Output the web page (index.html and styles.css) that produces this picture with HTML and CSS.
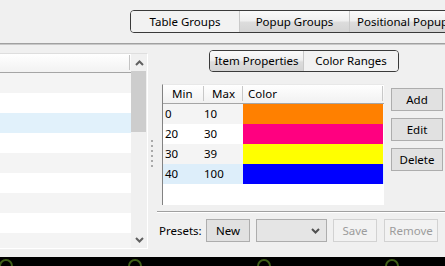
FILE: index.html
```html
<!DOCTYPE html>
<html>
<head>
<meta charset="utf-8">
<link rel="stylesheet" href="styles.css">
</head>
<body>
<div class="app">
  <div class="topbar">
    <div class="seg seg-top">
      <div class="seg-item flat w108">Table Groups</div>
      <div class="seg-item grad w110">Popup Groups</div>
      <div class="seg-item grad w120">Positional Popup</div>
    </div>
  </div>
  <div class="rule"></div>
  <div class="main">
    <div class="left">
      <div class="list">
        <div class="list-body">
          <div class="list-header"><div class="lh-col"></div></div>
          <div class="lrow alt"></div>
          <div class="lrow"></div>
          <div class="lrow sel"></div>
          <div class="lrow"></div>
          <div class="lrow alt"></div>
          <div class="lrow"></div>
          <div class="lrow alt"></div>
          <div class="lrow"></div>
          <div class="lrow alt"></div>
        </div>
        <div class="vscroll">
          <div class="sbtn">
            <svg width="9" height="6" viewBox="0 0 9 6"><path d="M1 5 L4.5 1.5 L8 5" fill="none" stroke="#606060" stroke-width="2"/></svg>
          </div>
          <div class="thumb"></div>
          <div class="track"></div>
          <div class="sbtn">
            <svg width="9" height="6" viewBox="0 0 9 6"><path d="M1 1 L4.5 4.5 L8 1" fill="none" stroke="#606060" stroke-width="2"/></svg>
          </div>
        </div>
      </div>
    </div>
    <div class="splitter">
      <div class="grip">
        <span></span><span></span><span></span><span></span><span></span><span></span>
      </div>
    </div>
    <div class="right">
      <div class="tabs-row">
        <div class="seg seg-tabs">
          <div class="seg-item grad w93">Item Properties</div>
          <div class="seg-item flat w95">Color Ranges</div>
        </div>
      </div>
      <div class="content">
        <div class="table">
          <div class="thead">
            <div class="th c-min">Min</div>
            <div class="th c-max">Max</div>
            <div class="th c-color">Color</div>
          </div>
          <div class="trow alt">
            <div class="td c-min">0</div>
            <div class="td c-max">10</div>
            <div class="td c-color sw-orange"></div>
          </div>
          <div class="trow">
            <div class="td c-min">20</div>
            <div class="td c-max">30</div>
            <div class="td c-color sw-pink"></div>
          </div>
          <div class="trow alt">
            <div class="td c-min">30</div>
            <div class="td c-max">39</div>
            <div class="td c-color sw-yellow"></div>
          </div>
          <div class="trow sel">
            <div class="td c-min">40</div>
            <div class="td c-max">100</div>
            <div class="td c-color sw-blue"></div>
          </div>
        </div>
        <div class="side-btns">
          <div class="btn">Add</div>
          <div class="btn">Edit</div>
          <div class="btn">Delete</div>
        </div>
      </div>
      <div class="sep"></div>
      <div class="presets">
        <span class="plabel">Presets:</span>
        <div class="btn btn-new">New</div>
        <div class="combo">
          <svg width="9" height="6" viewBox="0 0 9 6"><path d="M1 1 L4.5 4.5 L8 1" fill="none" stroke="#505050" stroke-width="2"/></svg>
        </div>
        <div class="btn dis btn-save">Save</div>
        <div class="btn dis btn-remove">Remove</div>
      </div>
    </div>
  </div>
  <div class="bottom">
    <svg width="445" height="9" viewBox="0 0 445 9">
      <circle cx="6" cy="9" r="6" fill="none" stroke="#3f5f18" stroke-width="2"/>
      <circle cx="135" cy="9" r="6" fill="none" stroke="#3f5f18" stroke-width="2"/>
      <circle cx="264" cy="9" r="6" fill="none" stroke="#3f5f18" stroke-width="2"/>
      <circle cx="392" cy="9" r="6" fill="none" stroke="#3f5f18" stroke-width="2"/>
    </svg>
  </div>
</div>
</body>
</html>
```

FILE: styles.css
```css
* { box-sizing: border-box; }
html, body { margin: 0; padding: 0; }
body {
  background: #f0f0f0;
  font-family: "Noto Sans", "DejaVu Sans", sans-serif;
  font-size: 11.5px;
  color: #000;
  width: 445px;
  height: 266px;
  overflow: hidden;
}
.app { width: 445px; height: 266px; display: flex; flex-direction: column; }

.topbar {
  height: 43px;
  padding: 10px 0 0 130px;
  overflow: hidden;
  flex: none;
}
.seg {
  display: flex;
  border: 1px solid #3a3a3a;
  border-radius: 4px;
  overflow: hidden;
  height: 23px;
  width: max-content;
}
.seg-item {
  display: flex;
  align-items: center;
  justify-content: center;
  height: 100%;
  border-left: 1px solid #c9c9c9;
  white-space: nowrap;
  line-height: 1;
}
.seg-item:first-child { border-left: none; }
.flat { background: #f2f2f2; }
.grad { background: linear-gradient(#fafafa, #f0f0f0 45%, #dcdcdc 55%, #d4d4d4); }
.w108 { width: 108px; }
.w110 { width: 110px; }
.w120 { width: 120px; justify-content: flex-start; padding-left: 7px; }
.w93 { width: 93px; }
.w95 { width: 95px; }

.rule {
  height: 2px;
  background: #a0a0a0;
  border-bottom: 1px solid #c8c8c8;
  flex: none;
}

.main { display: flex; height: 212px; flex: none; }

.left { width: 148px; padding-top: 8px; flex: none; }
.list {
  display: flex;
  height: 196px;
  margin-left: -1px;
  width: 149px;
  border: 1px solid #dedede;
  border-right-color: #fff;
  border-bottom-color: #fff;
  background: #fff;
}
.list-body { width: 131px; overflow: hidden; }
.list-header {
  height: 19px;
  border-bottom: 1px solid #a5a5a5;
  background: linear-gradient(#ffffff, #f2f2f2);
  display: flex;
  justify-content: flex-end;
}
.lh-col { width: 2px; border-left: 1px solid #c4c4c4; margin: 1px 0 2px; }
.lrow { height: 20px; background: #fff; }
.lrow.alt { background: #f4f4f4; }
.lrow.sel { background: #e1f1fb; }

.vscroll {
  width: 16px;
  background: #f0f0f0;
  display: flex;
  flex-direction: column;
}
.sbtn { height: 17px; display: flex; align-items: center; justify-content: center; flex: none; }
.thumb { height: 61px; background: #cdcdcd; margin: 0 1px 0 0; flex: none; }
.track { flex: 1; }

.splitter { width: 9px; flex: none; display: flex; align-items: center; justify-content: center; padding-top: 4px; }
.grip { display: flex; flex-direction: column; gap: 3px; margin-left: -1px; }
.grip span { width: 2px; height: 2px; background: #a9a9a9; display: block; }

.right { flex: 1; display: flex; flex-direction: column; }
.tabs-row { padding: 5px 0 0 52px; height: 39px; flex: none; }
.seg-tabs { height: 22px; }

.content { display: flex; padding-left: 5px; height: 121px; flex: none; }
.table {
  width: 222px;
  height: 121px;
  background: #fff;
  border-left: 1px solid #828282;
  border-top: 1px solid #e8e8e8;
}
.thead {
  display: flex;
  height: 19px;
  background: linear-gradient(#ffffff, #f1f1f1);
  border-bottom: 1px solid #a5a5a5;
}
.th {
  display: flex;
  align-items: center;
  border-right: 1px solid #c8c8c8;
  margin: 1px 0 2px;
  padding-left: 9px;
  line-height: 1;
}
.thead .c-min { width: 41px; }
.thead .c-max { width: 39px; padding-left: 8px; }
.thead .c-color { width: 140px; padding-left: 5px; }
.trow { display: flex; height: 20px; background: #fff; }
.trow.alt { background: #f4f4f4; }
.trow.sel { background: #ddeefa; }
.td { display: flex; align-items: center; line-height: 1; }
.trow .c-min { width: 40px; padding-left: 2px; }
.trow .c-max { width: 40px; padding-left: 1px; }
.trow .c-color { width: 140px; }
.sw-orange { background: #ff8000; }
.sw-pink { background: #ff0080; }
.sw-yellow { background: #ffff00; }
.sw-blue { background: #0000ff; }

.side-btns { display: flex; flex-direction: column; gap: 7px; margin-left: 7px; padding-top: 4px; }
.btn {
  width: 52px;
  height: 23px;
  border: 1px solid #adadad;
  background: #e1e1e1;
  display: flex;
  align-items: center;
  justify-content: center;
  line-height: 1;
}

.sep { height: 2px; margin-top: 6px; border-top: 1px solid #a0a0a0; border-bottom: 1px solid #fff; flex: none; }

.presets { display: flex; align-items: center; height: 23px; margin-top: 6px; padding-left: 2px; }
.plabel { width: 47px; }
.btn-new { width: 44px; }
.combo {
  width: 71px;
  height: 23px;
  margin-left: 6px;
  border: 1px solid #adadad;
  background: #e5e5e5;
  display: flex;
  align-items: center;
  justify-content: flex-end;
  padding-right: 6px;
}
.dis { color: #9c9c9c; background: #f2f2f2; border-color: #d2d2d2; }
.btn-save { width: 44px; margin-left: 6px; }
.btn-remove { width: 54px; margin-left: 7px; }

.bottom { height: 9px; background: #000; flex: none; overflow: hidden; }
.bottom svg { display: block; }
```
